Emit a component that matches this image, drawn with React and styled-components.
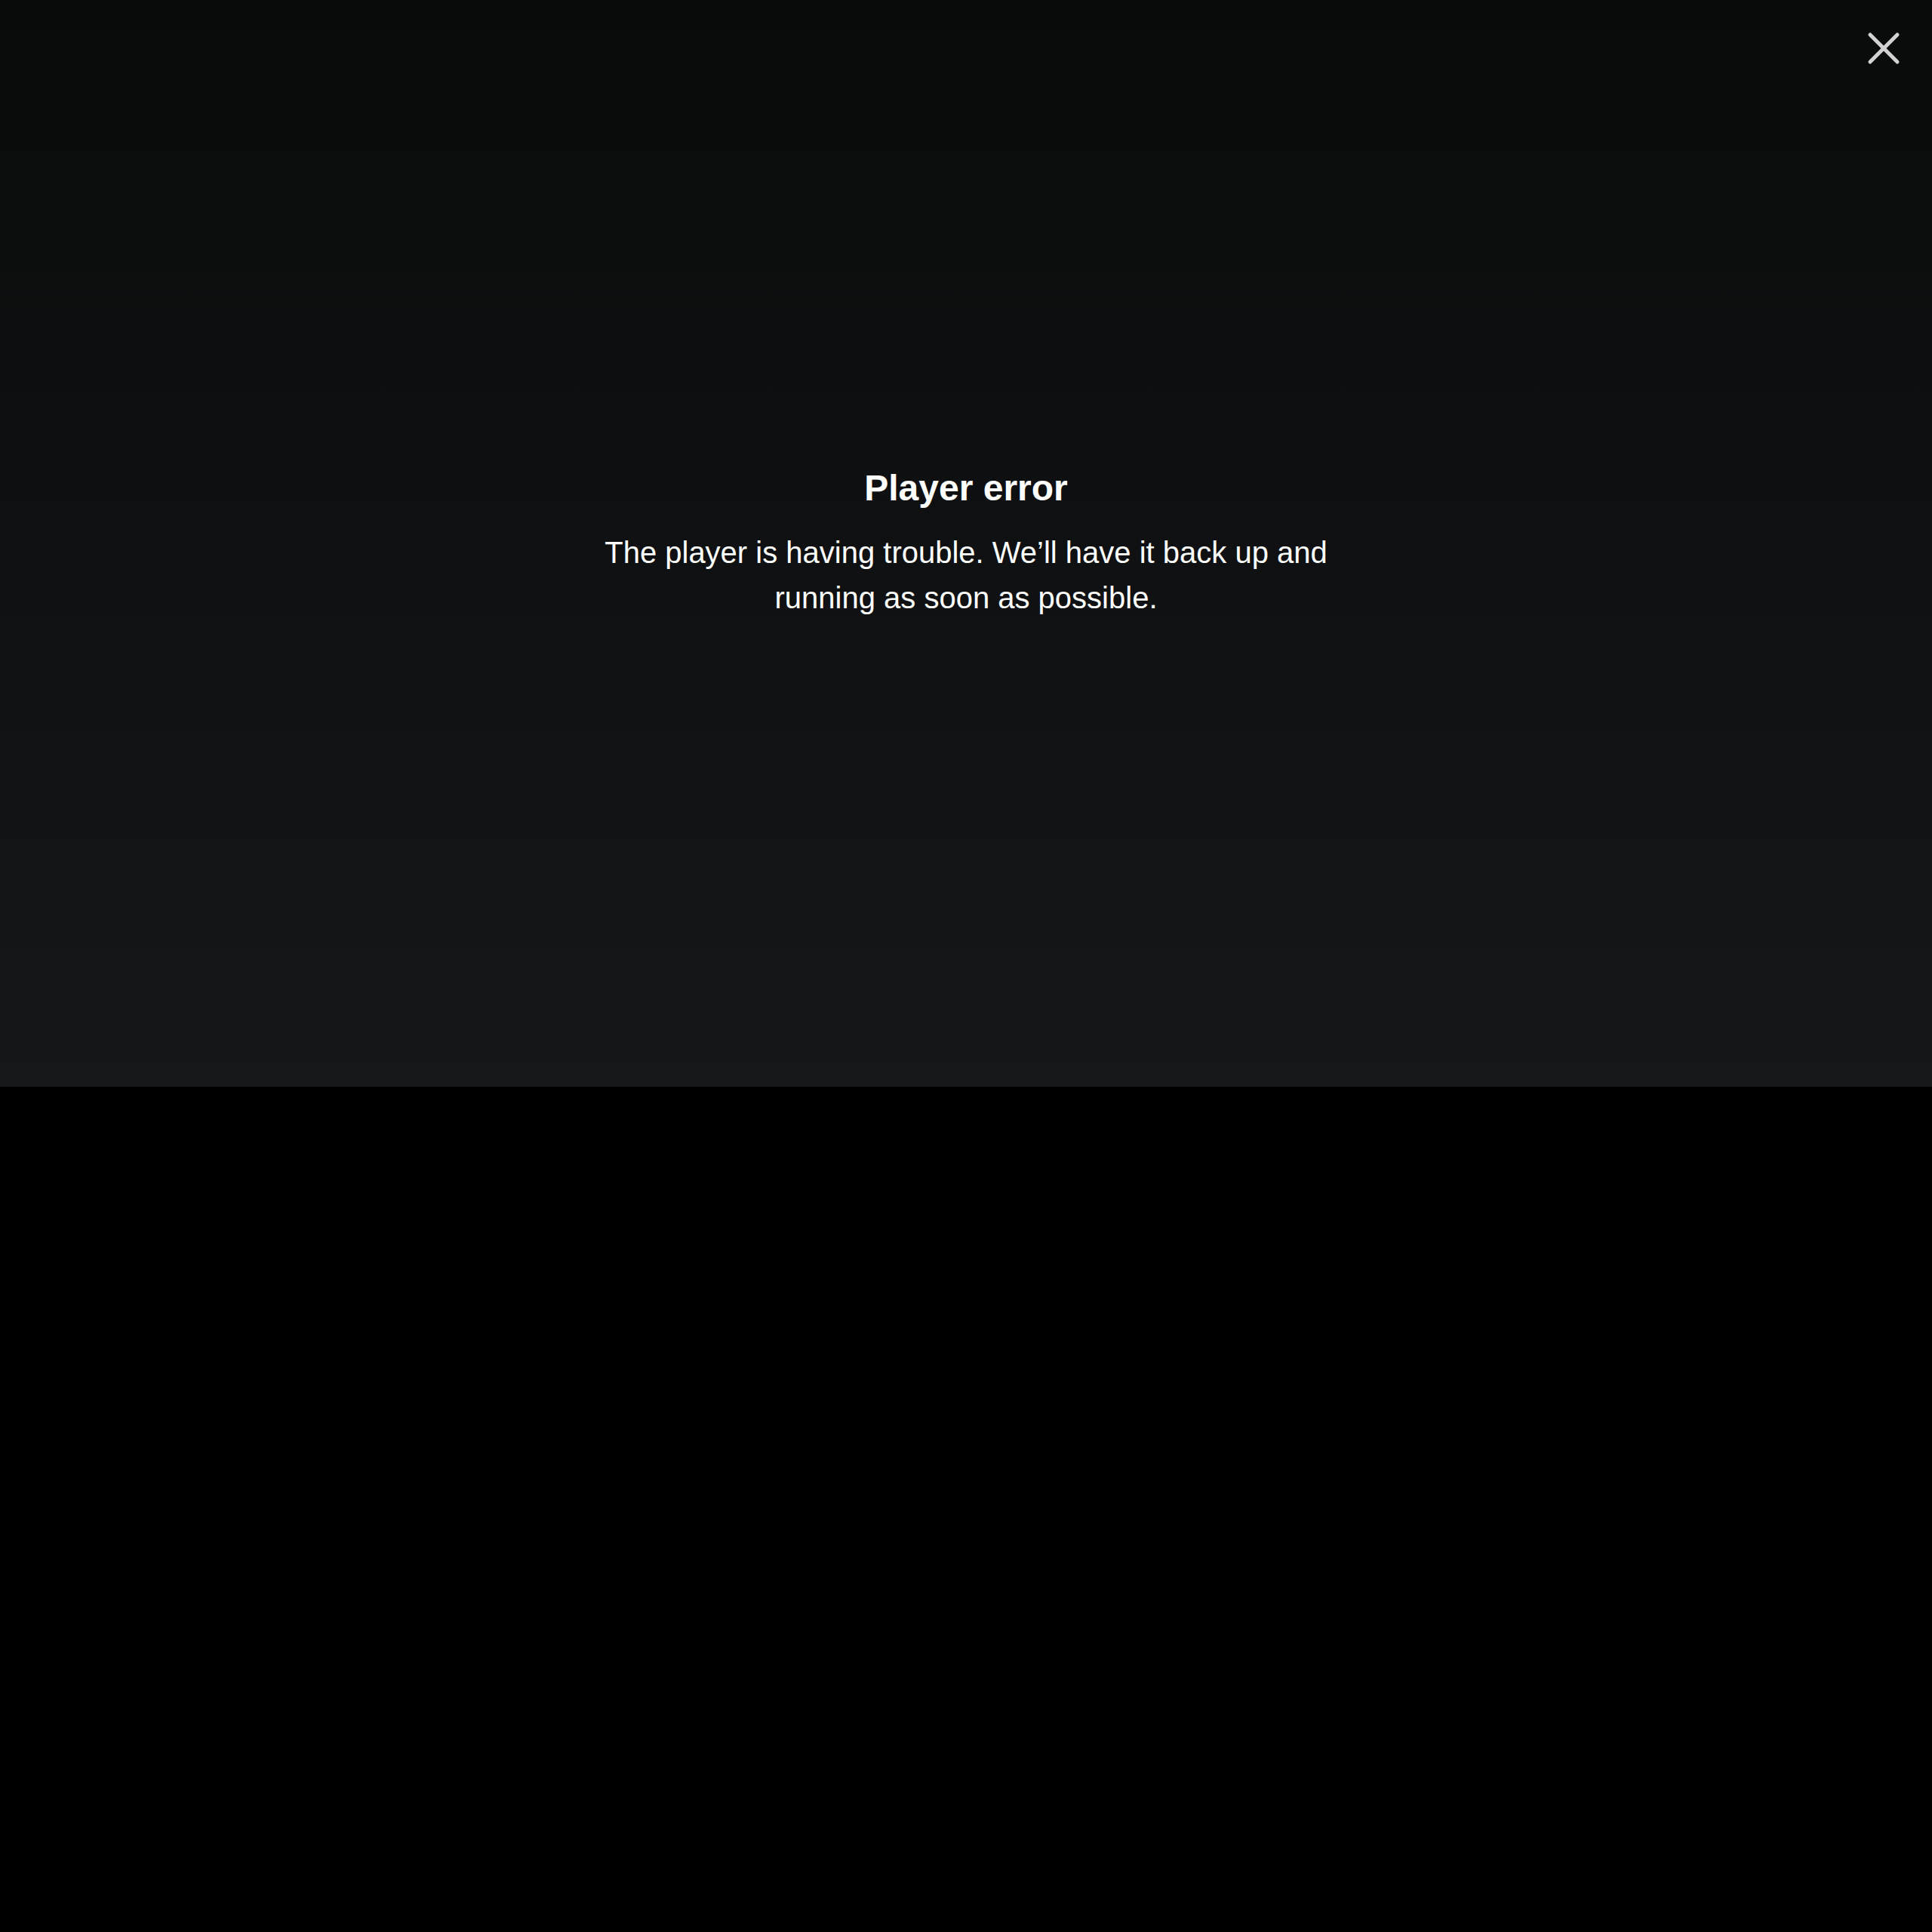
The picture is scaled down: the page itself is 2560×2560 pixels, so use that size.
import React from 'react'
import styled, { createGlobalStyle } from 'styled-components'

const GlobalStyle = createGlobalStyle`
  html, body {
    margin: 0;
    padding: 0;
    background: #000;
  }
  body {
    font-family: "Liberation Sans", Arial, Helvetica, sans-serif;
    -webkit-font-smoothing: antialiased;
  }
`

function CloseIcon() {
    return (
        <svg width="48" height="48" viewBox="0 0 48 48" fill="none">
            <path d="M6 6L42 42M42 6L6 42" stroke="currentColor" strokeWidth="5" strokeLinecap="round" />
        </svg>
    )
}

export default function App() {
    return (
        <>
            <GlobalStyle />
            <Player>
                <CloseButton aria-label="Close">
                    <CloseIcon />
                </CloseButton>
                <ErrorBox>
                    <Title>Player error</Title>
                    <Message>
                        The player is having trouble. We’ll have it back up and running as soon as possible.
                    </Message>
                </ErrorBox>
            </Player>
        </>
    )
}

const Player = styled.div`
    position: relative;
    width: 100%;
    aspect-ratio: 16 / 9;
    background: linear-gradient(180deg, #090a0a 0%, #0e0f10 40%, #16171a 100%);
    display: flex;
    align-items: center;
    justify-content: center;
    color: #fff;
`

const CloseButton = styled.button`
    position: absolute;
    top: 40px;
    right: 40px;
    width: 48px;
    height: 48px;
    padding: 0;
    border: 0;
    background: none;
    color: #d2d2d2;
    cursor: pointer;
    display: flex;
    svg{
        display: block;
    }
`

const ErrorBox = styled.div`
    max-width: 1000px;
    text-align: center;
    display: flex;
    flex-direction: column;
    align-items: center;
    gap: 27px;
`

const Title = styled.h1`
    margin: 0;
    font-size: 48px;
    line-height: 1.2;
    font-weight: 700;
`

const Message = styled.p`
    margin: 0;
    font-size: 40px;
    line-height: 1.5;
    font-weight: 400;
`
